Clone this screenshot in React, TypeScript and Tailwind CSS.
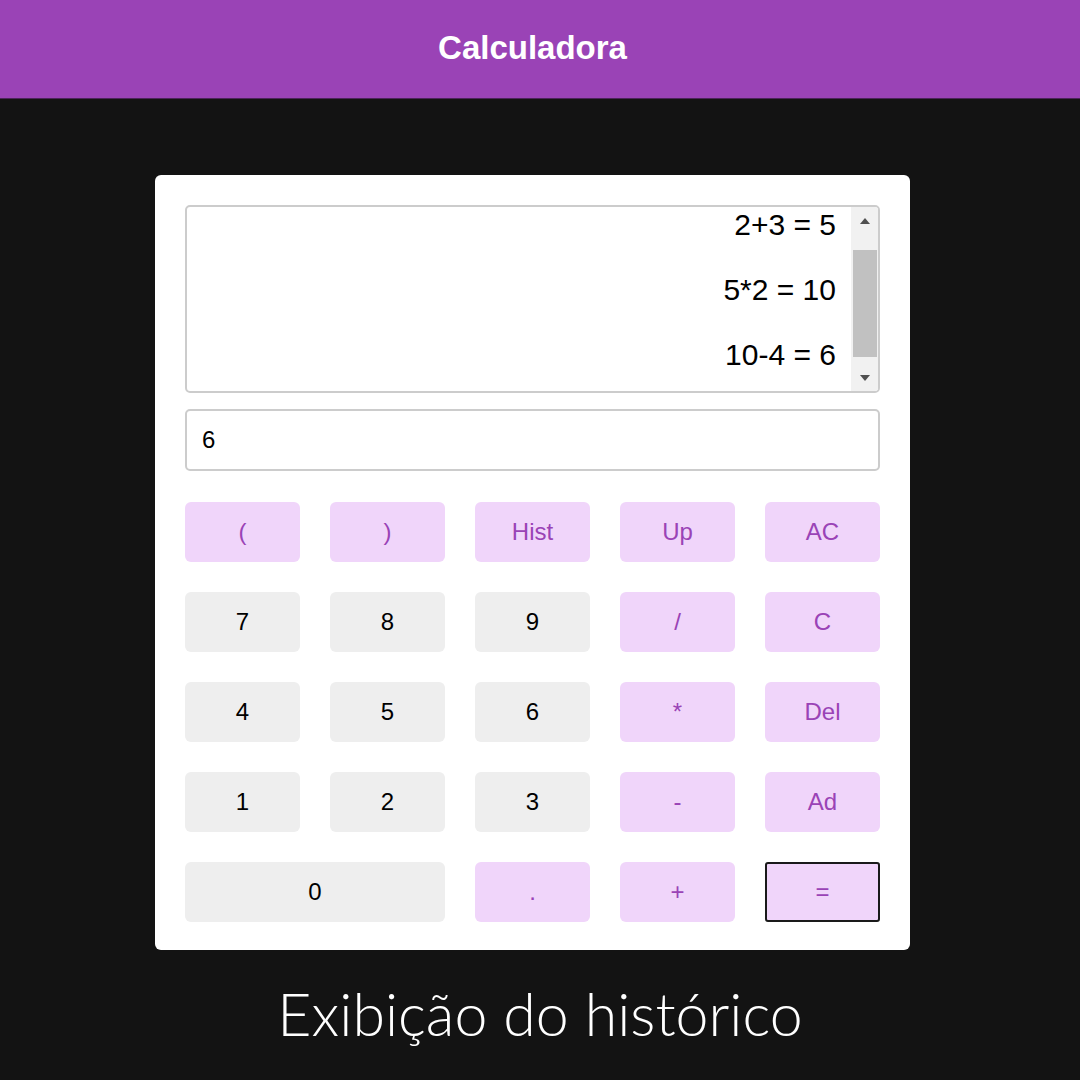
import React from "react";

type B = { label: string; kind: "p" | "g"; span?: boolean; focus?: boolean };

const rows: B[][] = [
  [
    { label: "(", kind: "p" },
    { label: ")", kind: "p" },
    { label: "Hist", kind: "p" },
    { label: "Up", kind: "p" },
    { label: "AC", kind: "p" },
  ],
  [
    { label: "7", kind: "g" },
    { label: "8", kind: "g" },
    { label: "9", kind: "g" },
    { label: "/", kind: "p" },
    { label: "C", kind: "p" },
  ],
  [
    { label: "4", kind: "g" },
    { label: "5", kind: "g" },
    { label: "6", kind: "g" },
    { label: "*", kind: "p" },
    { label: "Del", kind: "p" },
  ],
  [
    { label: "1", kind: "g" },
    { label: "2", kind: "g" },
    { label: "3", kind: "g" },
    { label: "-", kind: "p" },
    { label: "Ad", kind: "p" },
  ],
  [
    { label: "0", kind: "g", span: true },
    { label: ".", kind: "p" },
    { label: "+", kind: "p" },
    { label: "=", kind: "p", focus: true },
  ],
];

export default function App() {
  const all = rows.flat();
  return (
    <div className="w-[1080px] h-[1080px] bg-[#131313] flex flex-col items-center font-['Liberation_Sans',Arial,sans-serif]">
      <div className="w-full h-[99px] bg-[#9a43b6] border-b border-[#4a2458] flex items-center justify-center pr-[15px] pb-[4px]">
        <h1 className="text-white font-bold text-[33px] leading-none">Calculadora</h1>
      </div>
      <div className="w-full flex">
        <div className="w-[1065px] flex justify-center">
          <div className="mt-[76px] w-[755px] bg-white rounded-[6px] p-[30px] pb-[28px] flex flex-col">
            <div className="h-[188px] border-2 border-[#cccccc] rounded-[5px] flex overflow-hidden">
              <div className="flex-1 flex flex-col items-end pr-[15px] text-[30px] text-black leading-none pt-[3px] gap-[35px]">
                <div>2+3 = 5</div>
                <div>5*2 = 10</div>
                <div>10-4 = 6</div>
              </div>
              <div className="w-[27px] bg-[#f1f1f1] flex flex-col items-center">
                <div className="h-[27px] flex items-center justify-center">
                  <svg width="12" height="8" viewBox="0 0 12 8"><polygon points="6,1 11,7 1,7" fill="#505050" /></svg>
                </div>
                <div className="w-[24px] h-[107px] mt-[16px] bg-[#c1c1c1]"></div>
                <div className="flex-1"></div>
                <div className="h-[27px] flex items-center justify-center">
                  <svg width="12" height="8" viewBox="0 0 12 8"><polygon points="1,1 11,1 6,7" fill="#505050" /></svg>
                </div>
              </div>
            </div>
            <div className="mt-[16px] h-[62px] border-2 border-[#cccccc] rounded-[5px] flex items-center px-[15px] text-[24px] text-black">
              6
            </div>
            <div className="mt-[31px] grid grid-cols-5 gap-x-[30px] gap-y-[30px]">
              {all.map((b, i) => (
                <div
                  key={i}
                  className={
                    "h-[60px] flex items-center justify-center text-[24px] " +
                    (b.span ? "col-span-2 " : "") +
                    (b.kind === "p" ? "bg-[#f0d5fa] text-[#9a43b6] " : "bg-[#eeeeee] text-black ") +
                    (b.focus ? "border-2 border-[#1a1a1a] rounded-[3px]" : "rounded-[6px]")
                  }
                >
                  {b.label}
                </div>
              ))}
            </div>
          </div>
        </div>
      </div>
      <div className="mt-[34px] text-white text-[59px] font-light leading-none font-['Lato',sans-serif]">
        Exibição do histórico
      </div>
    </div>
  );
}
